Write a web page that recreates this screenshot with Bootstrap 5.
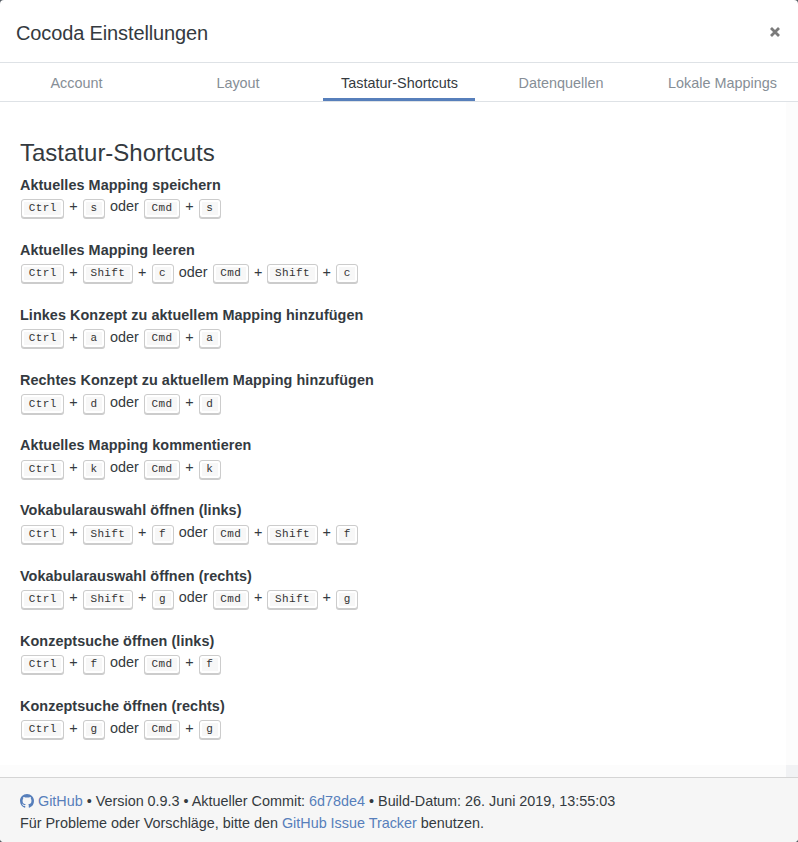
<!DOCTYPE html>
<html lang="de">
<head>
<meta charset="utf-8">
<meta name="viewport" content="width=device-width, initial-scale=1">
<title>Cocoda Einstellungen</title>
<link href="https://cdn.jsdelivr.net/npm/bootstrap@5.3.0/dist/css/bootstrap.min.css" rel="stylesheet">
<style>
html { background: #555c63; }
body { font-family: "Liberation Sans", Arial, sans-serif; font-size: 14.4px; line-height: 21.7px; color: #343a40; background: transparent; }
.settings { height: 842px; border-radius: 4px; background: #fff; }
.settings-head { height: 63px; border-bottom: 1px solid #dee2e6; }
.settings-title { font-size: 20px; line-height: 30px; letter-spacing: -.13px; }
.close-x { width: 10px; height: 10px; margin: 0 2px 2px 0; }
.settings-tabs { height: 39px; border-bottom: 1px solid #dee2e6; }
.settings-tabs .nav-link { width: 152px; height: 38px; padding: 10px 0 0 1px; color: #868e96; border-bottom: 3px solid transparent; white-space: nowrap; }
.settings-tabs .nav-link.active { color: #343a40; border-color: #577fbb; }
.settings-body { padding: 35.7px 20px 0; }
.track { width: 12px; background: #fcfcfc; }
.track-row { height: 12px; background: #fcfcfc; }
.track-corner { width: 12px; background: #f1f2f4; }
.section-title { font-size: 24px; line-height: 29px; margin: 0 0 8px; }
.shortcut { height: 65.15px; }
.shortcut b { letter-spacing: .06px; }
.shortcut kbd { display: inline-block; margin: 0 1.1px; padding: 1.1px 6.6px; font: 11px/15px "Liberation Mono", monospace; letter-spacing: .38px; color: #333; background: #f7f7f7; border: 1px solid #ccc; border-radius: 3px; box-shadow: 0 1px 0 rgba(0,0,0,.2), inset 0 0 0 2px #fff; vertical-align: .3px; }
.settings-foot { height: 65px; padding: 13px 20px 0; background: #f6f6f6; border-top: 1px solid #d5d5d5; letter-spacing: -.012px; }
.settings-foot a { color: #577fbb; text-decoration: none; }
.gh { width: 14px; height: 14px; vertical-align: -2px; }
</style>
</head>
<body>
<div class="settings d-flex flex-column overflow-hidden">
  <header class="settings-head d-flex align-items-center justify-content-between px-3 pt-1">
    <h5 class="settings-title fw-normal m-0">Cocoda Einstellungen</h5>
    <svg class="close-x" viewBox="0 0 10 10" aria-label="Schließen"><path d="M1 1 9 9M9 1 1 9" stroke="#7b7b7b" stroke-width="2.8"/></svg>
  </header>
  <nav class="settings-tabs nav flex-nowrap justify-content-between text-center">
    <a class="nav-link" href="#">Account</a>
    <a class="nav-link" href="#">Layout</a>
    <a class="nav-link active" href="#">Tastatur-Shortcuts</a>
    <a class="nav-link" href="#">Datenquellen</a>
    <a class="nav-link" href="#">Lokale Mappings</a>
  </nav>
  <div class="d-flex flex-grow-1 overflow-hidden">
    <main class="settings-body flex-grow-1">
      <h4 class="section-title fw-normal">Tastatur-Shortcuts</h4>
      <div class="shortcut"><b>Aktuelles Mapping speichern</b><br><kbd>Ctrl</kbd> + <kbd>s</kbd> oder <kbd>Cmd</kbd> + <kbd>s</kbd></div>
      <div class="shortcut"><b>Aktuelles Mapping leeren</b><br><kbd>Ctrl</kbd> + <kbd>Shift</kbd> + <kbd>c</kbd> oder <kbd>Cmd</kbd> + <kbd>Shift</kbd> + <kbd>c</kbd></div>
      <div class="shortcut"><b>Linkes Konzept zu aktuellem Mapping hinzufügen</b><br><kbd>Ctrl</kbd> + <kbd>a</kbd> oder <kbd>Cmd</kbd> + <kbd>a</kbd></div>
      <div class="shortcut"><b>Rechtes Konzept zu aktuellem Mapping hinzufügen</b><br><kbd>Ctrl</kbd> + <kbd>d</kbd> oder <kbd>Cmd</kbd> + <kbd>d</kbd></div>
      <div class="shortcut"><b>Aktuelles Mapping kommentieren</b><br><kbd>Ctrl</kbd> + <kbd>k</kbd> oder <kbd>Cmd</kbd> + <kbd>k</kbd></div>
      <div class="shortcut"><b>Vokabularauswahl öffnen (links)</b><br><kbd>Ctrl</kbd> + <kbd>Shift</kbd> + <kbd>f</kbd> oder <kbd>Cmd</kbd> + <kbd>Shift</kbd> + <kbd>f</kbd></div>
      <div class="shortcut"><b>Vokabularauswahl öffnen (rechts)</b><br><kbd>Ctrl</kbd> + <kbd>Shift</kbd> + <kbd>g</kbd> oder <kbd>Cmd</kbd> + <kbd>Shift</kbd> + <kbd>g</kbd></div>
      <div class="shortcut"><b>Konzeptsuche öffnen (links)</b><br><kbd>Ctrl</kbd> + <kbd>f</kbd> oder <kbd>Cmd</kbd> + <kbd>f</kbd></div>
      <div class="shortcut"><b>Konzeptsuche öffnen (rechts)</b><br><kbd>Ctrl</kbd> + <kbd>g</kbd> oder <kbd>Cmd</kbd> + <kbd>g</kbd></div>
    </main>
    <div class="track"></div>
  </div>
  <div class="track-row d-flex justify-content-end flex-shrink-0"><div class="track-corner"></div></div>
  <footer class="settings-foot flex-shrink-0">
    <a href="#"><svg class="gh" viewBox="0 0 16 16" fill="currentColor"><path d="M8 0C3.58 0 0 3.58 0 8c0 3.54 2.29 6.53 5.47 7.59.4.07.55-.17.55-.38 0-.19-.01-.82-.01-1.49-2.01.37-2.53-.49-2.69-.94-.09-.23-.48-.94-.82-1.13-.28-.15-.68-.52-.01-.53.63-.01 1.08.58 1.23.82.72 1.21 1.87.87 2.33.66.07-.52.28-.87.51-1.07-1.78-.2-3.64-.89-3.64-3.95 0-.87.31-1.59.82-2.15-.08-.2-.36-1.02.08-2.12 0 0 .67-.21 2.2.82.64-.18 1.32-.27 2-.27s1.36.09 2 .27c1.53-1.04 2.2-.82 2.2-.82.44 1.1.16 1.92.08 2.12.51.56.82 1.27.82 2.15 0 3.07-1.87 3.75-3.65 3.95.29.25.54.73.54 1.48 0 1.07-.01 1.93-.01 2.2 0 .21.15.46.55.38A8.01 8.01 0 0 0 16 8c0-4.42-3.58-8-8-8z"/></svg> GitHub</a> • Version 0.9.3 • Aktueller Commit: <a href="#">6d78de4</a> • Build-Datum: 26. Juni 2019, 13:55:03<br>
    Für Probleme oder Vorschläge, bitte den <a href="#">GitHub Issue Tracker</a> benutzen.
  </footer>
</div>
<script src="https://cdn.jsdelivr.net/npm/bootstrap@5.3.0/dist/js/bootstrap.bundle.min.js"></script>
</body>
</html>
